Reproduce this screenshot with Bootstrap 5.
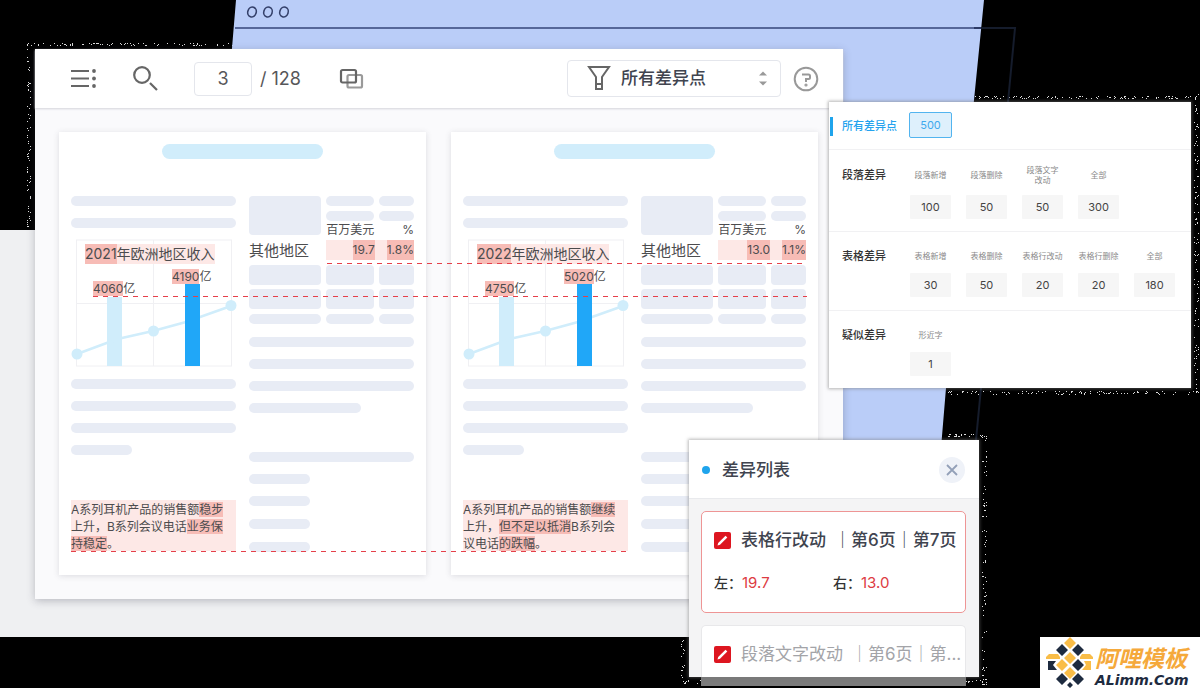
<!DOCTYPE html>
<html lang="zh-CN">
<head>
<meta charset="utf-8">
<meta name="viewport" content="width=device-width, initial-scale=1">
<title>文档差异对比</title>
<link href="https://cdn.jsdelivr.net/npm/bootstrap@5.3.0/dist/css/bootstrap.min.css" rel="stylesheet">
<style>
  body { background: #000; color: #4c4c4e; font-family: Inter, "Noto Sans CJK SC", sans-serif; font-size: 12px; }
  .stage { min-height: 100vh; padding: 49px 357px 88px 35px; }
  .backdrop { inset: 0; z-index: 1; }
  .speckle { position: absolute; left: -8px; top: -8px; width: calc(100% + 16px); height: calc(100% + 16px); z-index: 0; }

  /* document window */
  .viewer { z-index: 2; background: #fafafc; box-shadow: 0 2px 8px rgba(60, 60, 80, .3); }
  .toolbar { height: 59px; padding: 0 24px 0 35px; background: #fff; box-shadow: 0 1px 2px #d4d4da; position: relative; }
  .tool { border: 0; background: none; padding: 0; line-height: 0; }
  .tool-search { margin: 0 35px; }
  .tool-compare { margin-left: 38px; }
  .page-no { width: 58px; height: 34px; border: 1px solid #e4e6ec; border-radius: 4px; text-align: center; font-size: 18px; color: #57575a; background: #fff; }
  .page-total { font-size: 18px; color: #57575a; }
  .filter { width: 214px; height: 37px; }
  .filter select { appearance: none; width: 100%; height: 100%; border: 1px solid #e4e6ec; border-radius: 4px; background: #fff; padding: 0 30px 0 53px; font-size: 17px; font-weight: 500; color: #40444f; }
  .filter svg { position: absolute; pointer-events: none; top: 0; }
  .filter .funnel { left: 0; }
  .filter .arrows { right: 12px; }
  .sheets { padding: 24px 25px 24px 24px; gap: 25px; }
  .sheet { flex: 1 1 0; min-width: 0; height: 443px; padding: 12px 12px 24px; background: #fff; box-shadow: 0 1px 6px rgba(60, 60, 80, .16); }
  .heading-bar { width: 161px; height: 15px; border-radius: 8px; background: #d1edfb; margin: 0 auto 37px; }
  .sheet-cols { display: grid; grid-template-columns: 1fr 1fr; column-gap: 13px; }
  .bar { height: 10px; border-radius: 5px; background: #e8ecf5; margin-bottom: 12px; }
  .bar.w-mid { width: 68%; margin-bottom: 39px; }
  .bar.w-short { width: 37%; }
  .bar.loose { margin-bottom: 13px; }
  .figures { display: grid; grid-template-columns: 73fr 47fr 35fr; grid-template-rows: 15px 10px 19px 25px 24px 25px 23px; column-gap: 5px; }
  .figures .bar { margin: 0; }
  .block { height: 20px; border-radius: 4px; background: #e8ecf5; }
  .block.tall { height: 39px; grid-row: span 3; }
  .unit { line-height: 18px; white-space: nowrap; }
  .region { font-size: 15px; line-height: 22px; }
  .pale { background: #fde8e6; }
  .hit { background: #f7bcb6; }
  .values { height: 20px; line-height: 20px; grid-column: span 2; gap: 12px; }
  .chart { height: 127px; margin: -1px 0 13px; }
  .chart svg { position: absolute; inset: 0; width: 100%; height: 100%; overflow: visible; }
  .chart-title { position: absolute; left: 14px; top: 5px; font-size: 14px; line-height: 20px; white-space: nowrap; }
  .chart-label { position: absolute; line-height: 15px; white-space: nowrap; }
  .label-a { left: 22px; top: 42px; }
  .label-b { left: 101px; top: 30px; }
  .chart-title .hit, .chart-label .hit { display: inline-block; }
  .passage { margin: 45px 0 0; height: 51px; padding-top: 1px; line-height: 17px; font-size: 12px; }
  .link-line { position: absolute; height: 1px; background: repeating-linear-gradient(90deg, #e5404a 0 5px, transparent 5px 10px); }
  .link-1 { top: 155px; left: 292px; right: 36px; }
  .link-2 { top: 188px; left: 58px; right: 36px; }
  .link-3 { top: 443px; left: 36px; right: 215px; }

  /* counts panel */
  .counts-float { position: absolute; right: 9px; top: 102px; width: 362px; }
  .counts { z-index: 3; background: #fff; box-shadow: 0 0 3px 1px rgba(120, 120, 120, .55); }
  .count-row { display: flex; height: 79px; padding: 14px 0 0 13px; border-bottom: 1px solid #f1f1f3; }
  .count-row.first { height: 48px; padding-top: 10px; }
  .count-row.roomy { height: 82px; padding-top: 15px; }
  .count-row:last-child { border: 0; height: 77px; }
  .count-name { width: 68px; font-size: 11px; line-height: 20px; font-weight: 500; color: #333; }
  .first .count-name { color: #25a3ee; line-height: 28px; }
  .first::before { content: ""; position: absolute; left: 1px; top: 15px; width: 3px; height: 19px; background: #1fa4ec; }
  .count-grid { display: grid; grid-template-columns: repeat(5, 41px); column-gap: 15px; align-items: start; }
  .count-label { display: flex; align-items: center; justify-content: center; height: 20px; font-size: 8px; line-height: 10px; color: #8a8a8a; margin: 0 -2px 7px; text-align: center; }
  .roomy .count-label { margin-bottom: 10px; padding: 0 4px; }
  .count-btn { width: 41px; height: 24px; border: 0; border-radius: 1px; background: #f6f6f6; font-size: 11px; line-height: 24px; padding: 0; color: #444; display: block; }
  .count-btn.active { width: 43px; height: 26px; margin-left: -1px; border: 1px solid #52b4ef; border-radius: 2px; background: #def0fc; color: #3fa9ee; }

  /* difference list */
  .list-float { position: absolute; right: 221px; top: 440px; width: 290px; }
  .difflist { z-index: 4; background: #f4f4f5; height: 237px; box-shadow: 0 0 3px 1px rgba(120, 120, 120, .5); padding: 0 13px 0 12px; }
  .difflist header { height: 59px; margin: 0 -13px 12px -12px; padding: 2px 14px 0 13px; background: #fff; border-bottom: 1px solid #e9eaed; }
  .difflist h2 { font-size: 17px; font-weight: 500; color: #40444f; margin: 0 auto 0 12px; }
  .dot { width: 8px; height: 8px; border-radius: 50%; background: #1fa4ec; }
  .close-btn { width: 26px; height: 26px; border: 0; border-radius: 50%; background: #eff2f8; padding: 0; line-height: 0; }
  .diff-item { height: 102px; border: 1px solid #ee9595; border-radius: 5px; background: #fff; padding: 15px 4px 0 12px; margin-bottom: 12px; }
  .diff-item.next { border-color: #e8e8ea; height: 52px; border-bottom: 0; border-radius: 5px 5px 0 0; margin: 0; }
  .diff-head { font-size: 17px; line-height: 26px; font-weight: 500; color: #40444f; }
  .diff-head svg { flex: none; margin-right: 10px; }
  .next .diff-head { color: #a3a4a8; font-weight: 400; }
  .diff-sides { font-size: 14px; line-height: 20px; margin-top: 20px; color: #333; font-weight: 500; }
  .diff-sides div { width: 119px; }
  .diff-sides b { color: #dd3b42; font-weight: 400; font-size: 15px; }
  .tail { position: absolute; left: 12px; right: 13px; top: 100%; height: 9px; background: #7b7b7b; z-index: 3; }

  .brand { position: absolute; right: 0; bottom: 0; width: 160px; height: 51px; background: #fff; z-index: 5; text-decoration: none; }
  .brand-cn { font-size: 23px; line-height: 28px; font-weight: 700; color: #f5a93b; font-style: italic; }
  .brand-en { font: italic bold 14px/14px "DejaVu Sans", sans-serif; color: #1e2b3f; }
</style>
</head>
<body>
<div class="stage position-relative overflow-hidden">
  <svg class="backdrop position-absolute w-100 h-100" viewBox="0 0 1200 688" preserveAspectRatio="none" aria-hidden="true">
    <rect y="230" width="800" height="407" fill="#eff0f2"/>
    <path d="M236 0H984L974 100L946 388L940 460H800V200H220L231 60Z" fill="#bacdf8"/>
    <path d="M974 28H1015L1008 102M981 388L976 440" fill="none" stroke="#151c2c" stroke-width="2"/>
    <path d="M235 28H981" stroke="#34447a" stroke-width="1.5"/>
    <g fill="none" stroke="#34406a" stroke-width="1.6"><ellipse cx="252" cy="12" rx="4.2" ry="5" transform="rotate(18 252 12)"/><ellipse cx="268" cy="12" rx="4.2" ry="5" transform="rotate(18 268 12)"/><ellipse cx="284" cy="12" rx="4.2" ry="5" transform="rotate(18 284 12)"/></g>
  </svg>

  <div class="position-relative">
    <svg class="speckle" aria-hidden="true"></svg>
    <main class="viewer position-relative">
      <div class="toolbar d-flex align-items-center">
        <button class="tool" type="button" aria-label="目录"><svg width="27" height="22" fill="none" stroke="#666" stroke-width="2.2"><path d="M1 3H19M1 10.500H19M1 18H19"/><g fill="#666" stroke="none"><circle cx="24" cy="3" r="1.900"/><circle cx="24" cy="10.500" r="1.900"/><circle cx="24" cy="18" r="1.900"/></g></svg></button>
        <button class="tool tool-search" type="button" aria-label="搜索"><svg width="27" height="27" fill="none" stroke="#666" stroke-width="2.200"><circle cx="10" cy="10" r="7.800"/><path d="M18 18L25 25"/></svg></button>
        <input class="page-no" type="text" value="3" aria-label="页码">
        <span class="page-total ms-2">/ 128</span>
        <button class="tool tool-compare" type="button" aria-label="对比"><svg width="26" height="22" fill="none" stroke-width="2.200"><rect x="8.500" y="7" width="14.500" height="12.500" rx="1.500" stroke="#9a9a9a"/><rect x="2" y="2" width="15" height="12.500" rx="1.500" stroke="#666"/></svg></button>
        <div class="filter position-relative ms-auto">
          <select aria-label="差异类型"><option>所有差异点</option></select>
          <svg class="funnel" width="50" height="37" fill="none" stroke="#666" stroke-width="2"><path d="M22 7H42L35 17V29H29V17ZM29 24H35"/></svg>
          <svg class="arrows" width="12" height="37" fill="#999"><path d="M2 15.500L6 11.500L10 15.500ZM2 21.500L6 25.500L10 21.500Z"/></svg>
        </div>
        <button class="tool ms-2 ps-1" type="button" aria-label="帮助"><svg width="26" height="26" fill="none" stroke="#999" stroke-width="2"><circle cx="13" cy="13" r="11.300"/><path d="M9 8.500H15.500Q17 8.500 17 10V11.500Q17 13 15.500 13H13V16"/><circle cx="13" cy="19" r=".6" fill="#999"/></svg></button>
      </div>

      <div class="sheets d-flex position-relative">
        <article class="sheet">
          <div class="heading-bar"></div>
          <div class="sheet-cols">
            <div>
              <div class="bar"></div><div class="bar"></div>
              <div class="chart position-relative">
                <svg viewBox="0 0 165 127" preserveAspectRatio="none" aria-hidden="true"><rect x="5.500" y="1" width="155" height="126" fill="none" stroke="#f0f0f3"/><path d="M82.500 1V127M5 64.500H160" stroke="#f0f0f3"/><rect x="36" y="58" width="15" height="69" fill="#d0edfb"/><path d="M6 115L37 103.500L51 99L82 92L115 83L160 67" fill="none" stroke="#d0edfb" stroke-width="2.500"/><g fill="#d0edfb"><circle cx="6" cy="115" r="5.500"/><circle cx="82.500" cy="92" r="5.500"/><circle cx="160" cy="66.500" r="5.500"/></g><rect x="114" y="45" width="15" height="82" fill="#20a7f8"/></svg>
                <span class="chart-title pale"><span class="hit">2021</span>年欧洲地区收入</span>
                <span class="chart-label label-a"><span class="hit">4060</span>亿</span>
                <span class="chart-label label-b"><span class="hit">4190</span>亿</span>
              </div>
              <div class="bar"></div><div class="bar"></div><div class="bar"></div><div class="bar w-short"></div>
              <p class="passage pale">A系列耳机产品的销售额<span class="hit">稳步</span><br>上升，B系列会议电话<span class="hit">业务保</span><br><span class="hit">持稳定</span>。</p>
            </div>
            <div>
              <div class="figures">
                <div class="block tall"></div><div class="bar"></div><div class="bar"></div>
                <div class="bar"></div><div class="bar"></div>
                <div class="unit">百万美元</div><div class="unit text-end">%</div>
                <div class="region">其他地区</div>
                <div class="values pale d-flex justify-content-end"><span class="hit">19.7</span><span class="hit">1.8%</span></div>
                <div class="block"></div><div class="block"></div><div class="block"></div>
                <div class="block"></div><div class="block"></div><div class="block"></div>
                <div class="bar"></div><div class="bar"></div><div class="bar"></div>
              </div>
              <div class="bar"></div><div class="bar"></div><div class="bar"></div><div class="bar w-mid"></div>
              <div class="bar"></div><div class="bar w-short"></div><div class="bar w-short loose"></div><div class="bar w-short loose"></div><div class="bar w-short"></div>
            </div>
          </div>
        </article>

        <article class="sheet">
          <div class="heading-bar"></div>
          <div class="sheet-cols">
            <div>
              <div class="bar"></div><div class="bar"></div>
              <div class="chart position-relative">
                <svg viewBox="0 0 165 127" preserveAspectRatio="none" aria-hidden="true"><rect x="5.500" y="1" width="155" height="126" fill="none" stroke="#f0f0f3"/><path d="M82.500 1V127M5 64.500H160" stroke="#f0f0f3"/><rect x="36" y="58" width="15" height="69" fill="#d0edfb"/><path d="M6 115L37 103.500L51 99L82 92L115 83L160 67" fill="none" stroke="#d0edfb" stroke-width="2.500"/><g fill="#d0edfb"><circle cx="6" cy="115" r="5.500"/><circle cx="82.500" cy="92" r="5.500"/><circle cx="160" cy="66.500" r="5.500"/></g><rect x="114" y="45" width="15" height="82" fill="#20a7f8"/></svg>
                <span class="chart-title pale"><span class="hit">2022</span>年欧洲地区收入</span>
                <span class="chart-label label-a"><span class="hit">4750</span>亿</span>
                <span class="chart-label label-b"><span class="hit">5020</span>亿</span>
              </div>
              <div class="bar"></div><div class="bar"></div><div class="bar"></div><div class="bar w-short"></div>
              <p class="passage pale">A系列耳机产品的销售额<span class="hit">继续</span><br>上升，<span class="hit">但不足以抵消</span>B系列会<br>议电话<span class="hit">的跌幅</span>。</p>
            </div>
            <div>
              <div class="figures">
                <div class="block tall"></div><div class="bar"></div><div class="bar"></div>
                <div class="bar"></div><div class="bar"></div>
                <div class="unit">百万美元</div><div class="unit text-end">%</div>
                <div class="region">其他地区</div>
                <div class="values pale d-flex justify-content-end"><span class="hit">13.0</span><span class="hit">1.1%</span></div>
                <div class="block"></div><div class="block"></div><div class="block"></div>
                <div class="block"></div><div class="block"></div><div class="block"></div>
                <div class="bar"></div><div class="bar"></div><div class="bar"></div>
              </div>
              <div class="bar"></div><div class="bar"></div><div class="bar"></div><div class="bar w-mid"></div>
              <div class="bar"></div><div class="bar w-short"></div><div class="bar w-short loose"></div><div class="bar w-short loose"></div><div class="bar w-short"></div>
            </div>
          </div>
        </article>
        <div class="link-line link-1"></div><div class="link-line link-2"></div><div class="link-line link-3"></div>
      </div>
    </main>
  </div>

  <div class="counts-float">
    <svg class="speckle" aria-hidden="true"></svg>
    <section class="counts position-relative">
      <div class="count-row first"><div class="count-name">所有差异点</div><div class="count-grid"><button type="button" class="count-btn active">500</button></div></div>
      <div class="count-row roomy"><div class="count-name">段落差异</div><div class="count-grid">
        <div><div class="count-label">段落新增</div><button type="button" class="count-btn">100</button></div>
        <div><div class="count-label">段落删除</div><button type="button" class="count-btn">50</button></div>
        <div><div class="count-label">段落文字改动</div><button type="button" class="count-btn">50</button></div>
        <div><div class="count-label">全部</div><button type="button" class="count-btn">300</button></div>
      </div></div>
      <div class="count-row"><div class="count-name">表格差异</div><div class="count-grid">
        <div><div class="count-label">表格新增</div><button type="button" class="count-btn">30</button></div>
        <div><div class="count-label">表格删除</div><button type="button" class="count-btn">50</button></div>
        <div><div class="count-label">表格行改动</div><button type="button" class="count-btn">20</button></div>
        <div><div class="count-label">表格行删除</div><button type="button" class="count-btn">20</button></div>
        <div><div class="count-label">全部</div><button type="button" class="count-btn">180</button></div>
      </div></div>
      <div class="count-row"><div class="count-name">疑似差异</div><div class="count-grid">
        <div><div class="count-label">形近字</div><button type="button" class="count-btn">1</button></div>
      </div></div>
    </section>
  </div>

  <div class="list-float">
    <svg class="speckle" aria-hidden="true"></svg>
    <section class="difflist position-relative">
      <header class="d-flex align-items-center"><span class="dot"></span><h2>差异列表</h2><button type="button" class="close-btn" aria-label="关闭"><svg width="26" height="26" stroke="#93a0b8" stroke-width="1.800"><path d="M8 8L18 18M18 8L8 18"/></svg></button></header>
      <div class="diff-item">
        <div class="diff-head d-flex align-items-center text-nowrap"><svg width="17" height="17"><rect width="17" height="17" rx="2" fill="#dd1620"/><path d="M3.500 13.500L4.200 11L11.500 3.800L13.300 5.600L6 12.800Z" fill="#fff"/></svg><span class="me-2">表格行改动</span><span>｜第6页｜第7页</span></div>
        <div class="diff-sides d-flex"><div>左：<b>19.7</b></div><div>右：<b>13.0</b></div></div>
      </div>
      <div class="diff-item next">
        <div class="diff-head d-flex align-items-center text-nowrap"><svg width="17" height="17"><rect width="17" height="17" rx="2" fill="#dd1620"/><path d="M3.500 13.500L4.200 11L11.500 3.800L13.300 5.600L6 12.800Z" fill="#fff"/></svg><span class="me-2">段落文字改动</span><span>｜第6页｜第...</span></div>
      </div>
    </section>
    <div class="tail"></div>
  </div>

  <a class="brand d-flex" href="#">
    <svg width="55" height="51" aria-hidden="true"><g fill="#f9bd48"><path d="M30 0L36 6L30 12L24 6ZM30 15L36 21L30 27L24 21ZM22 22L28 28L22 34L16 28ZM30 30L36 36L30 42L24 36Z"/><path d="M40 20L42 17H50L53 20V22H40ZM44 24H51V33H42L46 28Z"/></g><g fill="#1e2b3f"><path d="M22 7L28 13L22 19L16 13ZM38 7L44 13L38 19L32 13ZM38 22L44 28L38 34L32 28ZM22 36L28 42L22 48L16 42ZM38 36L44 42L38 48L32 42ZM30 45L33 48L30 51L27 48Z"/><path d="M8 24H16L13 28L17 33H8Z"/></g><path d="M6 20L9 17H18L20 20V22H6Z" fill="#f9bd48"/></svg>
    <span class="d-block pt-2"><span class="brand-cn d-block text-nowrap">阿哩模板</span><span class="brand-en d-block">ALimm.Com</span></span>
  </a>
</div>
<script src="https://cdn.jsdelivr.net/npm/bootstrap@5.3.0/dist/js/bootstrap.bundle.min.js"></script>
<script>
  // Scatter single-pixel grains around the edge of each floating window.
  let seed = 7;
  const rnd = () => (seed = (seed * 16807) % 2147483647) / 2147483647;
  document.querySelectorAll('.speckle').forEach(svg => {
    const { width: w, height: h } = svg.getBoundingClientRect();
    let d = '';
    const grain = (x, y) => { d += `M${Math.floor(x)} ${Math.floor(y)}h1v1h-1z`; };
    for (let i = 0; i < w * 0.4; i++) { grain(rnd() * w, 2 + rnd() * 3); grain(rnd() * w, h - 5 + rnd() * 4); }
    for (let i = 0; i < h * 0.35; i++) { grain(rnd() * 4, rnd() * h); grain(w - 5 + rnd() * 5, rnd() * h); }
    svg.innerHTML = `<path d="${d}" fill="#ddd"/>`;
  });
</script>
</body>
</html>
